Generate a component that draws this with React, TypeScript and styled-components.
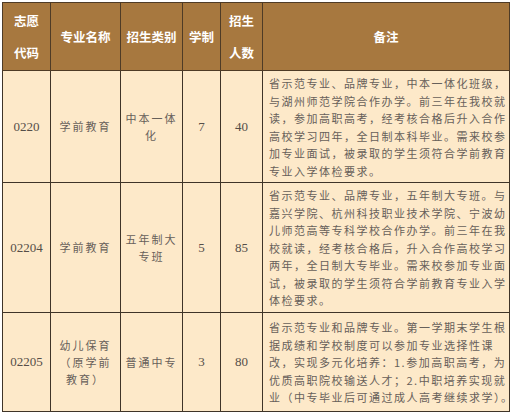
import React from "react";
import styled, { createGlobalStyle } from "styled-components";

const GlobalStyle = createGlobalStyle`
    html, body {
        margin: 0;
        padding: 0;
        background: #ffffff;
    }
`;

interface Row {
    code: string;
    name: string[];
    kind: string[];
    years: string;
    count: string;
    remark: string[];
    height: number;
}

const rows: Row[] = [
    {
        code: "0220",
        name: ["学前教育"],
        kind: ["中本一体", "化"],
        years: "7",
        count: "40",
        remark: [
            "省示范专业、品牌专业，中本一体化班级，",
            "与湖州师范学院合作办学。前三年在我校就",
            "读，参加高职高考，经考核合格后升入合作",
            "高校学习四年，全日制本科毕业。需来校参",
            "加专业面试，被录取的学生须符合学前教育",
            "专业入学体检要求。",
        ],
        height: 112,
    },
    {
        code: "02204",
        name: ["学前教育"],
        kind: ["五年制大", "专班"],
        years: "5",
        count: "85",
        remark: [
            "省示范专业、品牌专业，五年制大专班。与",
            "嘉兴学院、杭州科技职业技术学院、宁波幼",
            "儿师范高等专科学校合作办学。前三年在我",
            "校就读，经考核合格后，升入合作高校学习",
            "两年，全日制大专毕业。需来校参加专业面",
            "试，被录取的学生须符合学前教育专业入学",
            "体检要求。",
        ],
        height: 130,
    },
    {
        code: "02205",
        name: ["幼儿保育", "（原学前", "教育）"],
        kind: ["普通中专"],
        years: "3",
        count: "80",
        remark: [
            "省示范专业和品牌专业。第一学期末学生根",
            "据成绩和学校制度可以参加专业选择性课",
            "改，实现多元化培养：1.参加高职高考，为",
            "优质高职院校输送人才；2.中职培养实现就",
            "业（中专毕业后可通过成人高考继续求学）。",
        ],
        height: 99,
    },
];

export default function App() {
    return (
        <Page>
            <GlobalStyle />
            <Table>
                <colgroup>
                    <col style={{ width: 48 }} />
                    <col style={{ width: 70 }} />
                    <col style={{ width: 62 }} />
                    <col style={{ width: 38 }} />
                    <col style={{ width: 42 }} />
                    <col style={{ width: 247 }} />
                </colgroup>
                <thead>
                    <tr>
                        <HeadCell>
                            <Stacked>志愿</Stacked>
                            <Stacked>代码</Stacked>
                        </HeadCell>
                        <HeadCell>专业名称</HeadCell>
                        <HeadCell>招生类别</HeadCell>
                        <HeadCell>学制</HeadCell>
                        <HeadCell>
                            <Stacked>招生</Stacked>
                            <Stacked>人数</Stacked>
                        </HeadCell>
                        <HeadCell>备注</HeadCell>
                    </tr>
                </thead>
                <tbody>
                    {rows.map(row => (
                        <tr key={row.code} style={{ height: row.height }}>
                            <NumberCell>{row.code}</NumberCell>
                            <TextCell>
                                {row.name.map(line => (
                                    <Line key={line}>{line}</Line>
                                ))}
                            </TextCell>
                            <TextCell>
                                {row.kind.map(line => (
                                    <Line key={line}>{line}</Line>
                                ))}
                            </TextCell>
                            <NumberCell>{row.years}</NumberCell>
                            <NumberCell>{row.count}</NumberCell>
                            <RemarkCell>
                                {row.remark.map(line => (
                                    <RemarkLine key={line}>{line}</RemarkLine>
                                ))}
                            </RemarkCell>
                        </tr>
                    ))}
                </tbody>
            </Table>
        </Page>
    );
}

const Page = styled.div`
    width: 513px;
    height: 415px;
    padding: 2px 0 0 2px;
    box-sizing: border-box;
    background: #ffffff;
    overflow: hidden;
`;

const Table = styled.table`
    width: 507px;
    border-collapse: collapse;
    table-layout: fixed;
    background: #fde9c9;
    border: 1px solid #7a6a58;
`;

const HeadCell = styled.th`
    height: 67px;
    padding: 0;
    background: #a7783f;
    border: 1px solid #4e3b26;
    color: #ffffff;
    font-family: "Noto Sans CJK SC", sans-serif;
    font-size: 12.5px;
    font-weight: 700;
    text-align: center;
    vertical-align: middle;
`;

const Stacked = styled.div`
    line-height: 32px;
`;

const BodyCell = styled.td`
    padding: 0;
    border: 1px solid #3f3428;
    color: #67605a;
    text-align: center;
    vertical-align: middle;
`;

const NumberCell = styled(BodyCell)`
    font-family: "Liberation Serif", serif;
    font-size: 13px;
    color: #554e48;
`;

const TextCell = styled(BodyCell)`
    font-family: "Noto Sans CJK SC", sans-serif;
    font-size: 11px;
    letter-spacing: 2px;
`;

const Line = styled.div`
    line-height: 17px;
`;

const RemarkCell = styled(BodyCell)`
    padding: 2px 0 0 6px;
    text-align: left;
    font-family: "Noto Sans CJK SC", sans-serif;
    font-size: 11px;
    letter-spacing: 1.5px;
`;

const RemarkLine = styled.div`
    line-height: 17.5px;
    white-space: nowrap;
`;
